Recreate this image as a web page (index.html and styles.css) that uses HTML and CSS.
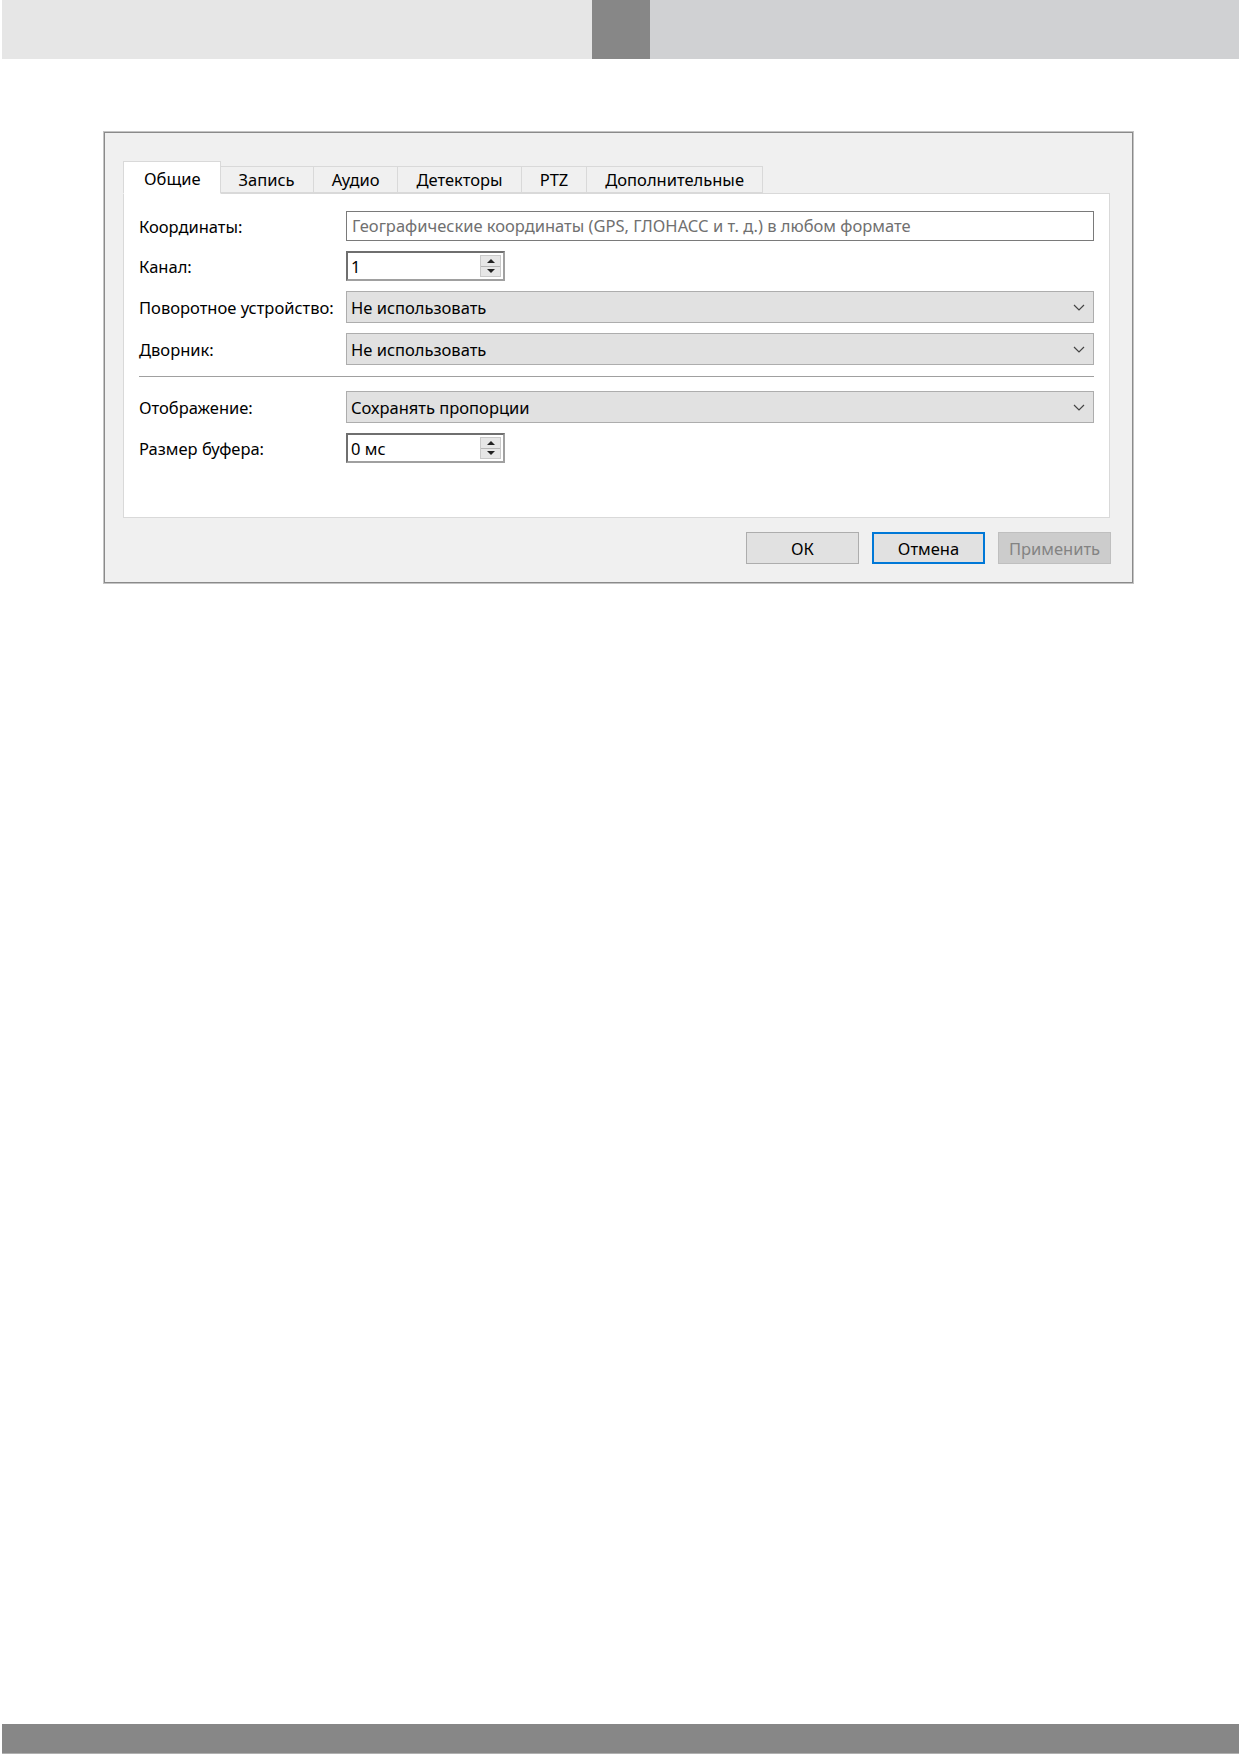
FILE: index.html
```html
<!DOCTYPE html>
<html lang="ru">
<head>
<meta charset="utf-8">
<title>Настройки камеры</title>
<link rel="stylesheet" href="styles.css">
</head>
<body>
<div class="page">
  <header class="topbar">
    <div class="topbar-left"></div>
    <div class="topbar-mark"></div>
    <div class="topbar-right"></div>
  </header>

  <main class="content">
    <section class="dialog">
      <nav class="tabs">
        <div class="tab active">Общие</div>
        <div class="tab">Запись</div>
        <div class="tab">Аудио</div>
        <div class="tab">Детекторы</div>
        <div class="tab">PTZ</div>
        <div class="tab">Дополнительные</div>
      </nav>

      <div class="pane">
        <div class="form">
          <label class="label">Координаты:</label>
          <div class="input placeholder">Географические координаты (GPS, ГЛОНАСС и т. д.) в любом формате</div>

          <label class="label">Канал:</label>
          <div class="spin">
            <span class="spin-value">1</span>
            <span class="spin-btns"><span class="arr up"></span><span class="arr down"></span></span>
          </div>

          <label class="label">Поворотное устройство:</label>
          <div class="combo">
            <span>Не использовать</span>
            <svg class="chev" width="12" height="7" viewBox="0 0 12 7"><path d="M1 1 L6 6 L11 1" fill="none" stroke="#444" stroke-width="1.2"/></svg>
          </div>

          <label class="label">Дворник:</label>
          <div class="combo">
            <span>Не использовать</span>
            <svg class="chev" width="12" height="7" viewBox="0 0 12 7"><path d="M1 1 L6 6 L11 1" fill="none" stroke="#444" stroke-width="1.2"/></svg>
          </div>

          <hr class="sep">

          <label class="label">Отображение:</label>
          <div class="combo">
            <span>Сохранять пропорции</span>
            <svg class="chev" width="12" height="7" viewBox="0 0 12 7"><path d="M1 1 L6 6 L11 1" fill="none" stroke="#444" stroke-width="1.2"/></svg>
          </div>

          <label class="label">Размер буфера:</label>
          <div class="spin">
            <span class="spin-value">0 мс</span>
            <span class="spin-btns"><span class="arr up"></span><span class="arr down"></span></span>
          </div>
        </div>
      </div>

      <div class="buttons">
        <button class="btn">ОК</button>
        <button class="btn default">Отмена</button>
        <button class="btn disabled">Применить</button>
      </div>
    </section>
  </main>

  <footer class="bottombar"></footer>
</div>
</body>
</html>
```

FILE: styles.css
```css
html, body {
  margin: 0;
  padding: 0;
  background: #ffffff;
}

.page {
  min-height: 1754px;
  display: flex;
  flex-direction: column;
  font-family: "Noto Sans", "Open Sans", sans-serif;
  font-size: 16.5px;
  color: #000;
}

/* header strip */
.topbar {
  display: flex;
  height: 59px;
  padding-left: 2px;
}
.topbar-left { width: 590px; background: #e6e6e6; }
.topbar-mark { width: 58px; background: #878787; }
.topbar-right { flex: 1; background: #d0d1d3; }

.content {
  padding: 73px 0 0 104px;
}

/* dialog window */
.dialog {
  width: 1029px;
  box-sizing: border-box;
  background: #f0f0f0;
  border: 1px solid #8a8a8a;
  box-shadow: 0 0 0 1px #c4c4c4;
  padding: 27px 22px 18px 18px;
}

.tabs {
  display: flex;
  align-items: flex-end;
  height: 33px;
  position: relative;
  z-index: 1;
}
.tab {
  height: 27px;
  box-sizing: border-box;
  line-height: 25px;
  padding: 0 18px;
  border: 1px solid #d9d9d9;
  border-left: none;
  background: #f0f0f0;
  color: #000;
}
.tab:first-child { border-left: 1px solid #d9d9d9; }
.tab.active {
  height: 33px;
  line-height: 33px;
  padding: 0 19px 0 20px;
  background: #fff;
  border: 1px solid #d9d9d9;
  border-bottom: 1px solid #fff;
  margin-bottom: -1px;
}

.pane {
  background: #fff;
  border: 1px solid #d9d9d9;
  height: 325px;
  box-sizing: border-box;
  padding: 17px 15px 0 15px;
}

.form {
  display: grid;
  grid-template-columns: 207px 1fr;
  row-gap: 10px;
  align-items: center;
}

.label {
  white-space: nowrap;
}

.input {
  height: 30px;
  box-sizing: border-box;
  border: 1px solid #7a7a7a;
  background: #fff;
  padding: 0 5px;
  line-height: 28px;
  white-space: nowrap;
  overflow: hidden;
}
.placeholder { color: #707070; }

.spin {
  width: 159px;
  height: 30px;
  box-sizing: border-box;
  border: 2px solid #7a7a7a;
  border-color: #6f6f6f #a0a0a0 #a0a0a0 #6f6f6f;
  background: #fff;
  display: flex;
  align-items: center;
  justify-content: space-between;
  padding: 0 2px 0 3px;
}
.spin-btns {
  width: 21px;
  height: 22px;
  display: flex;
  flex-direction: column;
  background: #e6e6e6;
  border: 1px solid #c9c9c9;
  box-sizing: border-box;
}
.arr {
  flex: 1;
  position: relative;
}
.arr.up { border-bottom: 1px solid #b5b5b5; }
.arr::after {
  content: "";
  position: absolute;
  left: 50%;
  top: 50%;
  margin-left: -4px;
  border-left: 4px solid transparent;
  border-right: 4px solid transparent;
}
.arr.up::after { margin-top: -2px; border-bottom: 4px solid #222; }
.arr.down::after { margin-top: -2px; border-top: 4px solid #222; }

.combo {
  height: 32px;
  box-sizing: border-box;
  border: 1px solid #adadad;
  background: #e1e1e1;
  display: flex;
  align-items: center;
  justify-content: space-between;
  padding: 0 8px 0 4px;
}
.chev { display: block; }

.sep {
  grid-column: 1 / -1;
  border: none;
  border-top: 1px solid #a0a0a0;
  margin: 1px 0 4px 0;
}

.buttons {
  display: flex;
  justify-content: flex-end;
  gap: 13px;
  margin-top: 14px;
  margin-right: -1px;
}
.btn {
  width: 113px;
  height: 32px;
  box-sizing: border-box;
  font: inherit;
  background: #e1e1e1;
  border: 1px solid #adadad;
  color: #000;
  padding: 0;
}
.btn.default {
  border: 2px solid #0078d7;
}
.btn.disabled {
  background: #cccccc;
  border-color: #bfbfbf;
  color: #838383;
}

.bottombar {
  margin-top: auto;
  margin-left: 2px;
  height: 29px;
  background: #878787;
  border-bottom: 1px solid #b0b0b0;
}
```
